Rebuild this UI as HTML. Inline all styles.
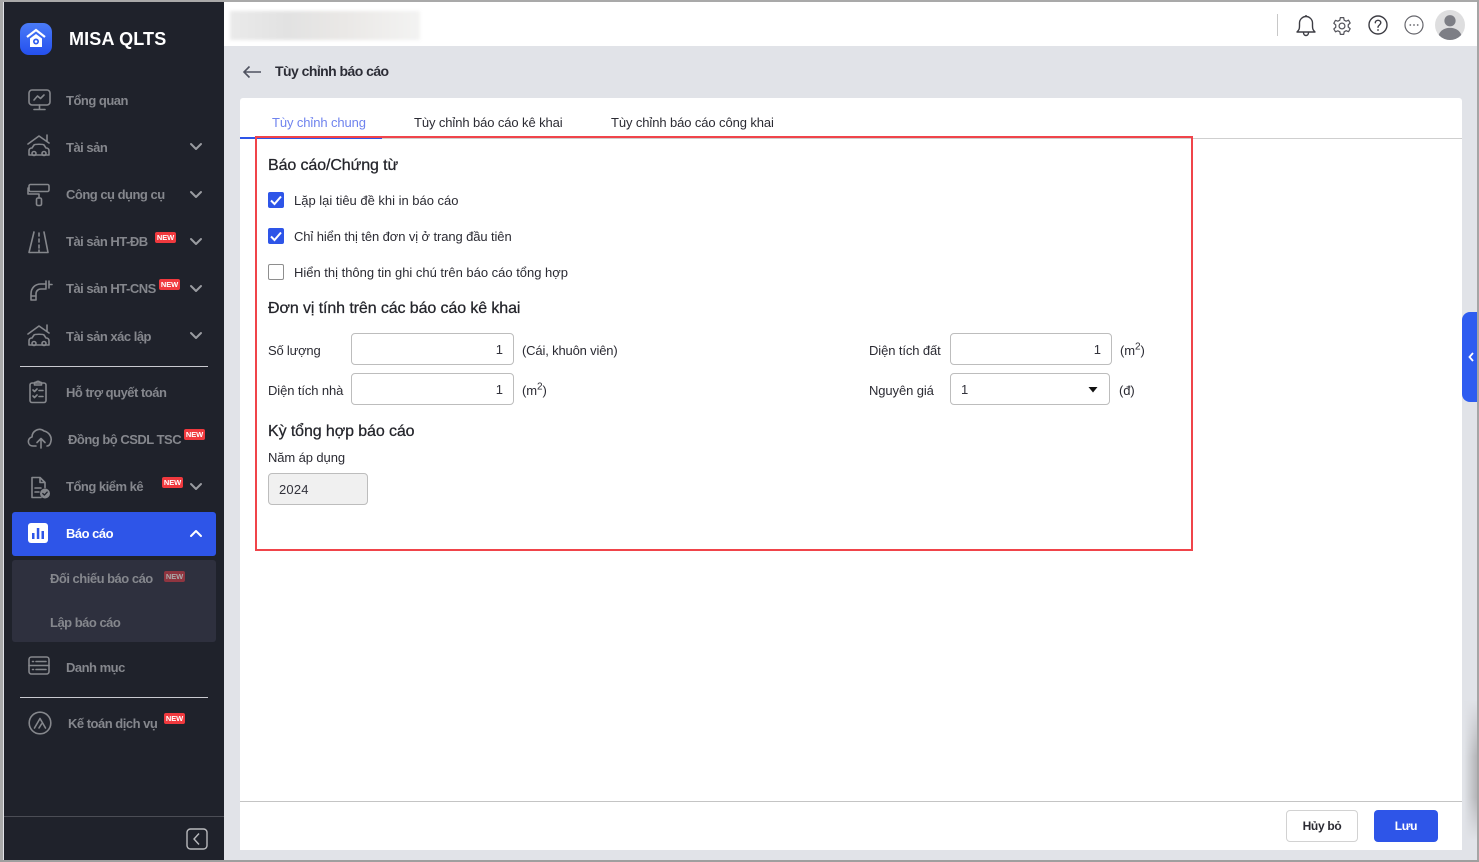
<!DOCTYPE html>
<html lang="vi"><head><meta charset="utf-8"><title>Tùy chỉnh báo cáo</title>
<style>
*{box-sizing:border-box}
html,body{margin:0;padding:0}
body{width:1479px;height:862px;overflow:hidden;position:relative;background:#e1e3e8;font-family:"Liberation Sans",Arial,sans-serif;color:#212121}
.a{position:absolute;white-space:nowrap}
.t{position:absolute;white-space:nowrap;font-size:13px;line-height:16px;color:#2b2b33;letter-spacing:-.1px;margin-top:1px}
.l{letter-spacing:-.01px}
.n{position:absolute;white-space:nowrap;font-size:13px;line-height:16px;color:#85878d;font-weight:bold;letter-spacing:-.5px;margin-top:1px}
.h{position:absolute;white-space:nowrap;font-size:16px;line-height:20px;color:#24252b;letter-spacing:-.1px;margin-top:1px;-webkit-text-stroke:.25px #24252b}
.new{position:absolute;width:21px;height:11px;background:#f0393e;border-radius:2px;color:#fff;font-size:7.5px;line-height:11px;font-weight:bold;text-align:center;letter-spacing:-.1px}
.i{position:absolute;fill:none;stroke:#85878c;stroke-width:1.6;stroke-linecap:round;stroke-linejoin:round}
.ch{position:absolute;width:14px;height:9px;fill:none;stroke:#9a9ca1;stroke-width:2;stroke-linecap:round;stroke-linejoin:round}
.inp{position:absolute;height:32px;background:#fff;border:1px solid #bdbdbd;border-radius:4px;font-size:13px;line-height:32px;color:#33333c}
.cb{position:absolute;left:268px;width:16px;height:16px;border-radius:2px;background:#2e55e8}
.sep{position:absolute;left:20px;width:188px;height:1px;background:#c9cad0}
</style></head><body>
<div class="a" style="left:0;top:0;width:1479px;height:2px;background:#a9a9a9"></div>
<div class="a" style="left:0;top:0;width:3px;height:862px;background:#a9a9a9"></div>
<div class="a" style="left:0;top:860px;width:1479px;height:2px;background:#9f9f9f"></div>
<div class="a" style="left:1464px;top:700px;width:13px;height:140px;background:linear-gradient(90deg,#e1e3e8,#b4b5b8);-webkit-mask-image:linear-gradient(180deg,transparent,#000 40%,#000 70%,transparent)"></div>
<div class="a" style="left:1477px;top:0;width:2px;height:860px;background:#a5a5a5"></div>

<!-- sidebar -->
<div class="a" style="left:4px;top:2px;width:220px;height:858px;background:#1f222b"></div>
<svg class="a" style="left:20px;top:23px" width="32" height="32" viewBox="0 0 32 32"><defs><linearGradient id="lg" x1="0" y1="0" x2="0" y2="1"><stop offset="0" stop-color="#4a7bf7"/><stop offset="1" stop-color="#2450ee"/></linearGradient></defs><rect width="32" height="32" rx="9" fill="url(#lg)"/><path d="M7 14 16 7l9 7" fill="none" stroke="#fff" stroke-width="2.200"/><path d="M10 15.500 16 11l6 4.500V24H10z" fill="#fff"/><circle cx="16" cy="18.500" r="3" fill="#2e5cf0"/><circle cx="16" cy="18.500" r="1.300" fill="#fff"/></svg>
<div class="a" style="left:69px;top:28px;font-size:18px;line-height:22px;font-weight:bold;color:#fff;letter-spacing:.15px">MISA QLTS</div>

<svg class="i" style="left:28px;top:89px" width="23" height="22" viewBox="0 0 23 22"><rect x="1" y="1" width="21" height="15" rx="3"/><path d="M11.500 16v4M6 20.500h11M6 11l3.500-4 3 2.500L16 6"/></svg>
<div class="n" style="left:66px;top:92px">Tổng quan</div>

<svg class="i" style="left:27px;top:134px" width="24" height="24" viewBox="0 0 24 24"><path d="M1 10 12 2l10 7M20 1v6"/><path d="M2 21v-4c0-2 1-3 3-3l2-3c1-1 9-1 10 0l2 3c2 0 3 1 3 3v4z"/><circle cx="7" cy="19.500" r="2"/><circle cx="17" cy="19.500" r="2"/></svg>
<div class="n" style="left:66px;top:139px">Tài sản</div>
<svg class="ch" style="left:189px;top:142px" viewBox="0 0 14 9"><path d="M2 2l5 5 5-5"/></svg>

<svg class="i" style="left:27px;top:183px" width="24" height="24" viewBox="0 0 24 24"><rect x="2" y="1.500" width="20" height="7" rx="1.500"/><path d="M2 5H1v6h11v4"/><rect x="9.500" y="15" width="5" height="7.500" rx="1.500"/></svg>
<div class="n" style="left:66px;top:186px">Công cụ dụng cụ</div>
<svg class="ch" style="left:189px;top:190px" viewBox="0 0 14 9"><path d="M2 2l5 5 5-5"/></svg>

<svg class="i" style="left:27px;top:230px" width="24" height="24" viewBox="0 0 24 24"><path d="M7 2 2 22.500h19L17 2M12 3v3M12 9v3M12 15v3M12 20v2"/></svg>
<div class="n" style="left:66px;top:233px">Tài sản HT-ĐB</div>
<div class="new" style="left:155px;top:232px">NEW</div>
<svg class="ch" style="left:189px;top:237px" viewBox="0 0 14 9"><path d="M2 2l5 5 5-5"/></svg>

<svg class="i" style="left:29px;top:278px" width="24" height="24" viewBox="0 0 24 24"><path d="M2 22v-6c0-6 4-10 10-10h5M17 3v7M20 3v7M20 6.500h3M7 22v-6c0-3 2-5 5-5h5M2 18h5M2 22h5"/></svg>
<div class="n" style="left:66px;top:280px">Tài sản HT-CNS</div>
<div class="new" style="left:159px;top:279px">NEW</div>
<svg class="ch" style="left:189px;top:284px" viewBox="0 0 14 9"><path d="M2 2l5 5 5-5"/></svg>

<svg class="i" style="left:27px;top:324px" width="24" height="24" viewBox="0 0 24 24"><path d="M1 10 12 2l10 7M20 1v6"/><path d="M2 21v-4c0-2 1-3 3-3l2-3c1-1 9-1 10 0l2 3c2 0 3 1 3 3v4z"/><circle cx="7" cy="19.500" r="2"/><circle cx="17" cy="19.500" r="2"/></svg>
<div class="n" style="left:66px;top:328px">Tài sản xác lập</div>
<svg class="ch" style="left:189px;top:331px" viewBox="0 0 14 9"><path d="M2 2l5 5 5-5"/></svg>

<div class="sep" style="top:366px"></div>

<svg class="i" style="left:28px;top:380px" width="20" height="24" viewBox="0 0 20 24"><rect x="2" y="3" width="16" height="19.500" rx="2"/><path d="M6.500 3c0-1 1-1 2-1 .5-1 2.500-1 3 0 1 0 2 0 2 1v2h-7zM5 10l1.500 1.500L9 9M11 10.500h4M5 16l1.500 1.500L9 15M11 16.500h4"/></svg>
<div class="n" style="left:66px;top:384px">Hỗ trợ quyết toán</div>

<svg class="i" style="left:27px;top:426px" width="26" height="24" viewBox="0 0 26 24"><path d="M9 20H6c-6 0-6-8-1-9 0-6 7-10 12-6 5 1 8 6 7 10-.5 3-2 5-4 5M14 22v-9M10 16.500l4-4 4 4"/></svg>
<div class="n" style="left:68px;top:431px">Đồng bộ CSDL TSC</div>
<div class="new" style="left:184px;top:429px">NEW</div>

<svg class="i" style="left:30px;top:476px" width="22" height="24" viewBox="0 0 22 24"><path d="M11 21.500H2V1.500h8l5 5v5M10 1.500v5h5M5 12h6M5 16h4"/><circle cx="15" cy="17.500" r="5" fill="#85878c" stroke="none"/><path d="M12.800 17.500l1.600 1.600 2.800-3" stroke="#1f222b" stroke-width="1.300"/></svg>
<div class="n" style="left:66px;top:478px">Tổng kiểm kê</div>
<div class="new" style="left:162px;top:477px">NEW</div>
<svg class="ch" style="left:189px;top:482px" viewBox="0 0 14 9"><path d="M2 2l5 5 5-5"/></svg>

<div class="a" style="left:12px;top:512px;width:204px;height:44px;background:#2e55e8;border-radius:3px"></div>
<svg class="a" style="left:28px;top:523px" width="20" height="20" viewBox="0 0 20 20"><rect width="20" height="20" rx="3" fill="#fff"/><path d="M4 10v6h2.500v-6zM8.800 5v11h2.500V5zM13.500 8v8H16V8z" fill="#2e55e8"/></svg>
<div class="n" style="left:66px;top:525px;color:#fff">Báo cáo</div>
<svg class="ch" style="left:189px;top:529px;stroke:#fff" viewBox="0 0 14 9"><path d="M2 7l5-5 5 5"/></svg>

<div class="a" style="left:12px;top:560px;width:204px;height:82px;background:#2e303e;border-radius:3px"></div>
<div class="n" style="left:50px;top:570px">Đối chiếu báo cáo</div>
<div class="new" style="left:164px;top:571px;background:#8f3540;color:#aaa">NEW</div>
<div class="n" style="left:50px;top:614px">Lập báo cáo</div>

<svg class="i" style="left:28px;top:656px" width="22" height="19" viewBox="0 0 22 19"><rect x="1" y="1" width="20" height="17" rx="2.500"/><path d="M1 9.500h20M4.500 5.500h1M8 5.500h10M4.500 13.500h1M8 13.500h10"/></svg>
<div class="n" style="left:66px;top:659px">Danh mục</div>

<div class="sep" style="top:697px"></div>

<svg class="i" style="left:28px;top:711px" width="24" height="24" viewBox="0 0 24 24"><circle cx="12" cy="12" r="10.800"/><path d="M6.500 17 12 7.500l5.500 9.500M11 17l2.500-4"/></svg>
<div class="n" style="left:68px;top:715px">Kế toán dịch vụ</div>
<div class="new" style="left:164px;top:713px">NEW</div>

<div class="a" style="left:4px;top:816px;width:220px;height:1px;background:#4b4d55"></div>
<svg class="a" style="left:186px;top:828px" width="22" height="22" viewBox="0 0 22 22" fill="none" stroke="#b9babd" stroke-width="1.400"><rect x="1" y="1" width="20" height="20" rx="3.500"/><path d="M13 5.500 8 11l5 5.500"/></svg>

<!-- top bar -->
<div class="a" style="left:224px;top:2px;width:1253px;height:44px;background:#fff"></div>
<div class="a" style="left:230px;top:11px;width:190px;height:29px;background:linear-gradient(90deg,#eaeaea,#e2e2e2 30%,#eae8e6 60%,#f3f3f2);filter:blur(1.500px)"></div>
<div class="a" style="left:1277px;top:14px;width:1px;height:22px;background:#c8c8c8"></div>
<svg class="a" style="left:1296px;top:14px" width="20" height="23" viewBox="0 0 20 23" fill="none" stroke="#3d3d44" stroke-width="1.400" stroke-linejoin="round"><path d="M1 18c2-2 2.500-3 2.500-6V9c0-3.500 3-6.500 6.500-6.500s6.500 3 6.500 6.500v3c0 3 .5 4 2.500 6z"/><path d="M7.500 18.500c0 4 5 4 5 0M10 2.500V1"/></svg>
<svg class="a" style="left:1332px;top:16px" width="20" height="20" viewBox="0 0 24 24" fill="none" stroke="#55555c" stroke-width="1.500" stroke-linejoin="round"><path d="M10 2h4l.6 3 2.400 1.200 2.800-1.200 2 3.500-2.300 2v2.800l2.300 2-2 3.500-2.800-1.200L14.600 19 14 22h-4l-.6-3-2.400-1.200-2.800 1.200-2-3.500 2.300-2v-2.800l-2.300-2 2-3.500L7 6.200 9.400 5z"/><circle cx="12" cy="12" r="3.500"/></svg>
<svg class="a" style="left:1368px;top:15px" width="20" height="20" viewBox="0 0 20 20" fill="none" stroke="#3d3d44" stroke-width="1.400"><circle cx="10" cy="10" r="9"/><path d="M7.300 7.800C7.300 4.500 12.800 4.500 12.800 7.800c0 2.200-2.800 2.200-2.800 4.500" stroke-linecap="round"/><circle cx="10" cy="15" r=".9" fill="#3d3d44" stroke="none"/></svg>
<svg class="a" style="left:1404px;top:15px" width="20" height="20" viewBox="0 0 20 20" fill="none" stroke="#66666c" stroke-width="1.200"><circle cx="10" cy="10" r="9"/><circle cx="6.300" cy="10" r=".9" fill="#66666c" stroke="none"/><circle cx="10" cy="10" r=".9" fill="#66666c" stroke="none"/><circle cx="13.700" cy="10" r=".9" fill="#66666c" stroke="none"/></svg>
<svg class="a" style="left:1435px;top:10px" width="30" height="30" viewBox="0 0 32 32"><defs><clipPath id="av"><circle cx="16" cy="16" r="16"/></clipPath></defs><circle cx="16" cy="16" r="16" fill="#dededf"/><circle cx="16" cy="11.500" r="6" fill="#7d7e85"/><path d="M3 32c0-9 6-13 13-13s13 4 13 13z" fill="#7d7e85" clip-path="url(#av)"/></svg>

<!-- header -->
<svg class="a" style="left:242px;top:65px" width="20" height="14" viewBox="0 0 20 14" fill="none" stroke="#4f5260" stroke-width="1.600"><path d="M19 7H2M7.500 1.500 2 7l5.500 5.500"/></svg>
<div class="a" style="left:275px;top:63px;font-size:14px;line-height:16px;font-weight:bold;color:#2c2d36;letter-spacing:-.55px">Tùy chỉnh báo cáo</div>

<!-- card -->
<div class="a" style="left:240px;top:98px;width:1222px;height:752px;background:#fff;border-radius:3px 3px 0 0"></div>
<div class="a" style="left:240px;top:138px;width:1222px;height:1px;background:#cfcfcf"></div>
<div class="a" style="left:240px;top:137px;width:142px;height:2px;background:#2e55e8"></div>
<div class="t" style="left:272px;top:114px;color:#6f83ee">Tùy chỉnh chung</div>
<div class="t" style="left:414px;top:114px">Tùy chỉnh báo cáo kê khai</div>
<div class="t" style="left:611px;top:114px">Tùy chỉnh báo cáo công khai</div>

<div class="a" style="left:255px;top:136px;width:938px;height:415px;border:2px solid #f0444a"></div>

<div class="h" style="left:268px;top:155px">Báo cáo/Chứng từ</div>

<div class="cb" style="top:192px"><svg width="16" height="16" viewBox="0 0 16 16" fill="none" stroke="#fff" stroke-width="2"><path d="M3 8.500 6.500 12 13 4.500"/></svg></div>
<div class="t l" style="left:294px;top:192px">Lặp lại tiêu đề khi in báo cáo</div>
<div class="cb" style="top:228px"><svg width="16" height="16" viewBox="0 0 16 16" fill="none" stroke="#fff" stroke-width="2"><path d="M3 8.500 6.500 12 13 4.500"/></svg></div>
<div class="t l" style="left:294px;top:228px;letter-spacing:-.1px">Chỉ hiển thị tên đơn vị ở trang đầu tiên</div>
<div class="cb" style="top:264px;background:#fff;border:1px solid #8e8e8e"></div>
<div class="t l" style="left:294px;top:264px">Hiển thị thông tin ghi chú trên báo cáo tổng hợp</div>

<div class="h" style="left:268px;top:298px">Đơn vị tính trên các báo cáo kê khai</div>

<div class="t" style="left:268px;top:342px;letter-spacing:-.2px">Số lượng</div>
<div class="inp" style="left:351px;top:333px;width:163px;text-align:right;padding-right:10px">1</div>
<div class="t" style="left:522px;top:342px;letter-spacing:-.16px">(Cái, khuôn viên)</div>
<div class="t" style="left:268px;top:382px">Diện tích nhà</div>
<div class="inp" style="left:351px;top:373px;width:163px;text-align:right;padding-right:10px">1</div>
<div class="t" style="left:522px;top:382px">(m<sup style="font-size:10px;line-height:0">2</sup>)</div>

<div class="t" style="left:869px;top:342px">Diện tích đất</div>
<div class="inp" style="left:950px;top:333px;width:162px;text-align:right;padding-right:10px">1</div>
<div class="t" style="left:1120px;top:342px">(m<sup style="font-size:10px;line-height:0">2</sup>)</div>
<div class="t" style="left:869px;top:382px">Nguyên giá</div>
<div class="inp" style="left:950px;top:373px;width:160px;padding-left:10px">1<svg style="position:absolute;left:137px;top:13px" width="10" height="6" viewBox="0 0 10 6"><path d="M.5 0h9L5 5.500z" fill="#111"/></svg></div>
<div class="t" style="left:1119px;top:382px">(đ)</div>

<div class="h" style="left:268px;top:421px">Kỳ tổng hợp báo cáo</div>
<div class="t" style="left:268px;top:449px">Năm áp dụng</div>
<div class="inp" style="left:268px;top:473px;width:100px;background:#f0f0f0;padding-left:10px;letter-spacing:.2px">2024</div>

<div class="a" style="left:240px;top:801px;width:1222px;height:1px;background:#c4c4c4"></div>
<div class="a" style="left:1286px;top:810px;width:72px;height:32px;background:#fff;border:1px solid #d2d2d2;border-radius:4px;text-align:center;font-size:12px;line-height:30px;color:#2b2b33;font-weight:bold;letter-spacing:-.3px">Hủy bỏ</div>
<div class="a" style="left:1374px;top:810px;width:64px;height:32px;background:#2e55e8;border-radius:4px;text-align:center;font-size:12px;line-height:32px;color:#fff;font-weight:bold;letter-spacing:-.3px">Lưu</div>

<div class="a" style="left:1462px;top:312px;width:15px;height:90px;background:#2e5cf0;border-radius:8px 0 0 8px"></div>
<svg class="a" style="left:1467px;top:351px" width="8" height="12" viewBox="0 0 8 12" fill="none" stroke="#fff" stroke-width="1.800"><path d="M6 2 2.500 6 6 10"/></svg>
</body></html>
